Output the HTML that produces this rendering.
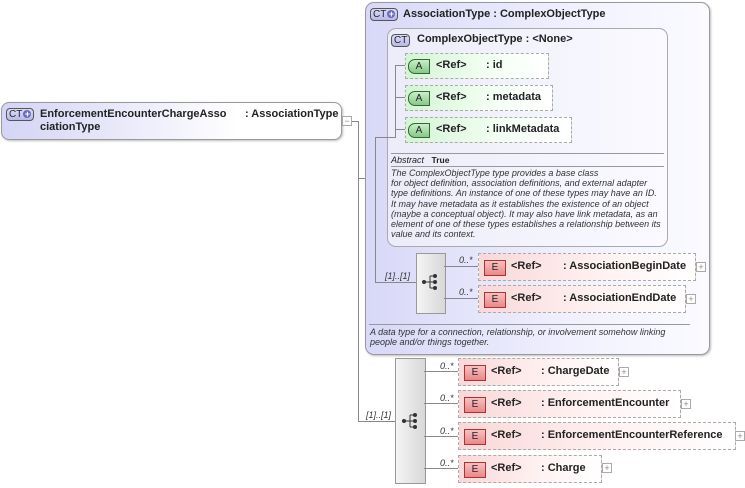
<!DOCTYPE html>
<html><head><meta charset="utf-8"><style>
body{margin:0;width:745px;height:488px;background:#fff;position:relative;overflow:hidden;font-family:"Liberation Sans",sans-serif;}
.a{position:absolute;}
.b{font-weight:bold;font-size:11px;color:#222;}
.ct{position:absolute;border:1px solid #555;border-radius:4px;background:linear-gradient(#dcdcf6,#b8b8e8);font-size:10px;line-height:11px;padding:0 2px;color:#223;height:11px;}
.ct .p{display:inline-block;width:8px;height:8px;border-radius:50%;background:#6a6ac0;color:#fff;font-size:9px;line-height:8px;text-align:center;vertical-align:0px;margin-left:1px;font-weight:bold;}
.el{position:absolute;border:1px dashed #aaa;background:linear-gradient(90deg,#f9d8d8,#fff3f3 60%,#fff);height:26px;}
.at{position:absolute;border:1px dashed #aaa;background:linear-gradient(90deg,#d4f4d4,#f4fff4 60%,#fff);height:24px;}
.E{position:absolute;left:5px;top:6px;width:20px;height:14px;border:1px solid #a33;background:linear-gradient(#f8c0c0,#e88888);font-size:10px;text-align:center;line-height:14px;color:#222;}
.A{position:absolute;left:10px;top:5px;width:20px;height:13px;border:1px solid #363;border-radius:7px 0 0 7px;background:linear-gradient(#c8f0c8,#88c888);font-size:10px;text-align:center;line-height:13px;color:#222;}
.t{position:absolute;top:6px;font-weight:bold;font-size:11px;color:#222;white-space:nowrap;}
.pl{position:absolute;width:8px;height:8px;border:1px solid #aaa;background:#fff;font-size:9px;line-height:8px;text-align:center;color:#888;}
.h{position:absolute;height:1px;background:#888;}
.v{position:absolute;width:1px;background:#888;}
.m{position:absolute;font-style:italic;font-size:9px;color:#333;}
.seq{position:absolute;border:1px solid #999;background:linear-gradient(90deg,#f4f4f4,#d8d8d8);}
.it{font-style:italic;font-size:9px;color:#333;line-height:10.2px;white-space:nowrap;}
</style></head><body>

<div class="a" style="left:1px;top:102px;width:339px;height:36px;border:1px solid #999;border-radius:8px;background:linear-gradient(90deg,#d4d4f6,#fff 70%);box-shadow:1px 1px 2px #bbb;"></div>
<div class="ct" style="left:6px;top:108px;">CT<span class="p">+</span></div>
<div class="a b" style="left:40px;top:108px;">EnforcementEncounterChargeAsso</div>
<div class="a b" style="left:245px;top:108px;">: AssociationType</div>
<div class="a b" style="left:40px;top:121px;">ciationType</div>
<div class="pl" style="left:342px;top:116px;">−</div>
<div class="h" style="left:352px;top:121px;width:6px;"></div>
<div class="v" style="left:358px;top:121px;height:300px;"></div>
<div class="h" style="left:358px;top:178px;width:8px;"></div>
<div class="h" style="left:358px;top:421px;width:37px;"></div>

<div class="a" style="left:365px;top:2px;width:343px;height:351px;border:1px solid #999;border-radius:9px;background:linear-gradient(90deg,#d8d8f8,#f4f4ff 70%,#fafaff);box-shadow:1px 1px 2px #bbb;"></div>
<div class="ct" style="left:370px;top:8px;">CT<span class="p">+</span></div>
<div class="a b" style="left:403px;top:8px;">AssociationType : ComplexObjectType</div>

<div class="a" style="left:387px;top:28px;width:279px;height:217px;border:1px solid #aaa;border-radius:9px;background:linear-gradient(90deg,#ececfa,#fafaff);"></div>
<div class="ct" style="left:391px;top:34px;">CT</div>
<div class="a b" style="left:417px;top:33px;">ComplexObjectType : &lt;None&gt;</div>

<div class="v" style="left:395px;top:65px;height:73px;"></div>
<div class="h" style="left:395px;top:65px;width:10px;"></div>
<div class="h" style="left:395px;top:97px;width:10px;"></div>
<div class="h" style="left:395px;top:129px;width:10px;"></div>
<div class="h" style="left:375px;top:137px;width:20px;"></div>
<div class="v" style="left:375px;top:137px;height:145px;"></div>
<div class="h" style="left:375px;top:282px;width:41px;"></div>

<div class="at" style="left:405px;top:53px;width:142px;"><div class="A" style="left:2px">A</div><span class="t" style="left:30px;top:5px">&lt;Ref&gt;</span><span class="t" style="left:80px;top:5px">: id</span></div>
<div class="at" style="left:405px;top:85px;width:146px;"><div class="A" style="left:2px">A</div><span class="t" style="left:30px;top:5px">&lt;Ref&gt;</span><span class="t" style="left:80px;top:5px">: metadata</span></div>
<div class="at" style="left:405px;top:117px;width:165px;"><div class="A" style="left:2px">A</div><span class="t" style="left:30px;top:5px">&lt;Ref&gt;</span><span class="t" style="left:80px;top:5px">: linkMetadata</span></div>

<div class="h" style="left:391px;top:153px;width:273px;background:#999"></div>
<div class="a" style="left:391px;top:155px;font-size:9px;color:#222"><i>Abstract</i>&nbsp;&nbsp;&nbsp;<b style="font-size:8.5px">True</b></div>
<div class="h" style="left:391px;top:166px;width:273px;background:#999"></div>
<div class="a it" style="left:391px;top:168px;">The ComplexObjectType type provides a base class<br>for object definition, association definitions, and external adapter<br>type definitions. An instance of one of these types may have an ID.<br>It may have metadata as it establishes the existence of an object<br>(maybe a conceptual object). It may also have link metadata, as an<br>element of one of these types establishes a relationship between its<br>value and its context.</div>

<div class="m" style="left:385px;top:271px;">[1]..[1]</div>
<div class="seq" style="left:416px;top:253px;width:28px;height:59px;"></div>
<svg class="a" style="left:420px;top:272px" width="20" height="20"><circle cx="4" cy="10" r="2" fill="#333"/><path d="M4 10H10M10 4V16M10 4H15M10 10H15M10 16H15" stroke="#333" fill="none"/><circle cx="15" cy="4" r="2" fill="#333"/><circle cx="15" cy="10" r="2" fill="#333"/><circle cx="15" cy="16" r="2" fill="#333"/></svg>
<div class="h" style="left:444px;top:266px;width:34px;"></div>
<div class="h" style="left:444px;top:298px;width:34px;"></div>
<div class="m" style="left:459px;top:255px;">0..*</div>
<div class="m" style="left:459px;top:287px;">0..*</div>
<div class="el" style="left:478px;top:253px;width:216px;"><div class="E">E</div><span class="t" style="left:32px">&lt;Ref&gt;</span><span class="t" style="left:84px">: AssociationBeginDate</span></div>
<div class="pl" style="left:696px;top:262px;">+</div>
<div class="el" style="left:478px;top:285px;width:206px;"><div class="E">E</div><span class="t" style="left:32px">&lt;Ref&gt;</span><span class="t" style="left:84px">: AssociationEndDate</span></div>
<div class="pl" style="left:686px;top:294px;">+</div>

<div class="h" style="left:369px;top:324px;width:321px;background:#999"></div>
<div class="a it" style="left:370px;top:327px;">A data type for a connection, relationship, or involvement somehow linking<br>people and/or things together.</div>

<div class="m" style="left:366px;top:410px;">[1]..[1]</div>
<div class="seq" style="left:395px;top:358px;width:29px;height:124px;"></div>
<svg class="a" style="left:400px;top:411px" width="20" height="20"><circle cx="4" cy="10" r="2" fill="#333"/><path d="M4 10H10M10 4V16M10 4H15M10 10H15M10 16H15" stroke="#333" fill="none"/><circle cx="15" cy="4" r="2" fill="#333"/><circle cx="15" cy="10" r="2" fill="#333"/><circle cx="15" cy="16" r="2" fill="#333"/></svg>
<div class="h" style="left:424px;top:371px;width:34px;"></div>
<div class="h" style="left:424px;top:403px;width:34px;"></div>
<div class="h" style="left:424px;top:436px;width:34px;"></div>
<div class="h" style="left:424px;top:468px;width:34px;"></div>
<div class="m" style="left:440px;top:361px;">0..*</div>
<div class="m" style="left:440px;top:393px;">0..*</div>
<div class="m" style="left:440px;top:426px;">0..*</div>
<div class="m" style="left:440px;top:458px;">0..*</div>
<div class="el" style="left:458px;top:358px;width:159px;"><div class="E">E</div><span class="t" style="left:32px">&lt;Ref&gt;</span><span class="t" style="left:82px">: ChargeDate</span></div>
<div class="pl" style="left:619px;top:367px;">+</div>
<div class="el" style="left:458px;top:390px;width:221px;"><div class="E">E</div><span class="t" style="left:32px">&lt;Ref&gt;</span><span class="t" style="left:82px">: EnforcementEncounter</span></div>
<div class="pl" style="left:681px;top:399px;">+</div>
<div class="el" style="left:458px;top:422px;width:276px;"><div class="E">E</div><span class="t" style="left:32px">&lt;Ref&gt;</span><span class="t" style="left:82px">: EnforcementEncounterReference</span></div>
<div class="pl" style="left:735px;top:431px;">+</div>
<div class="el" style="left:458px;top:455px;width:142px;"><div class="E">E</div><span class="t" style="left:32px">&lt;Ref&gt;</span><span class="t" style="left:82px">: Charge</span></div>
<div class="pl" style="left:602px;top:463px;">+</div>
</body></html>
